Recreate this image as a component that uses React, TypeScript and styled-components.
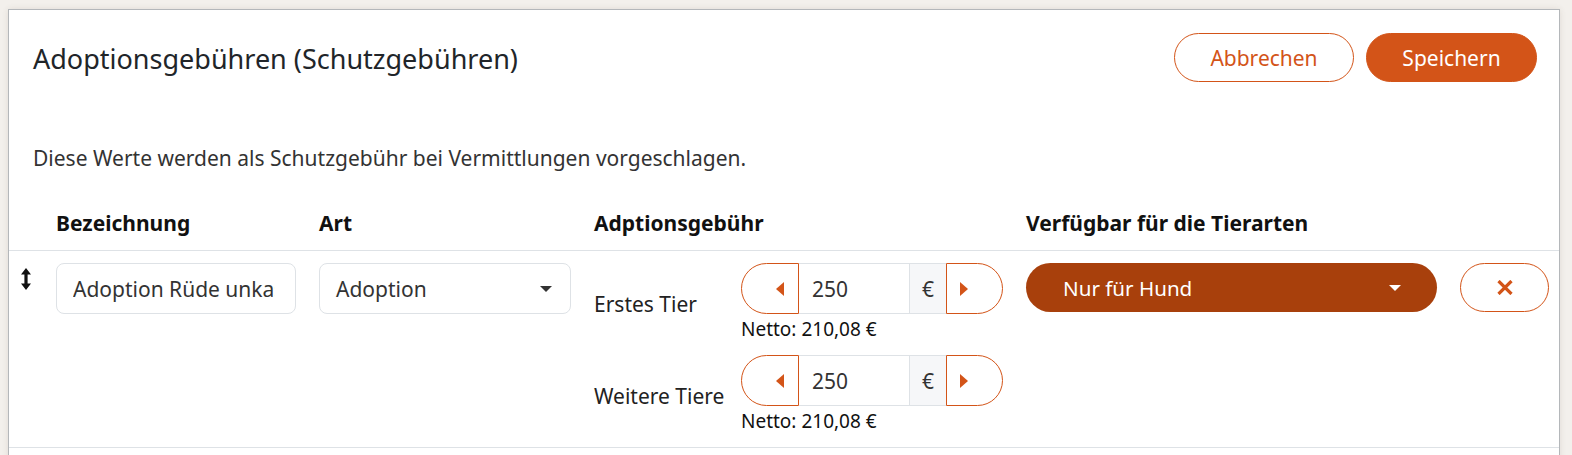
import React from "react";
import styled, { createGlobalStyle } from "styled-components";

const ORANGE = "#d35418";
const DARK_ORANGE = "#a8400c";
const LINE = "#dee2e6";
const COLS = "24px 240px 252px 409px 411px 89px";

const Global = createGlobalStyle`
  html, body { margin: 0; padding: 0; background: #f3f0ec; }
  body { font-family: "Noto Sans", "Open Sans", sans-serif; color: #212529; }
  * { box-sizing: border-box; }
`;

const Page = styled.div`
  padding: 9px 12px 0 8px;
  height: 455px;
  overflow: hidden;
`;

const Card = styled.section`
  background: #fff;
  border: 1px solid #b4b7ba;
  box-shadow: 0 0 6px rgba(90, 70, 50, 0.12);
  min-height: 600px;
`;

const CardHeader = styled.header`
  display: flex;
  align-items: flex-start;
  justify-content: space-between;
  padding: 23px 22px 0 24px;
`;

const Title = styled.h1`
  margin: 1px 0 0;
  font-size: 27px;
  line-height: 49px;
  font-weight: 400;
  color: #212529;
`;

const Actions = styled.div`
  display: flex;
  gap: 12px;
`;

const PillButton = styled.button<{ $primary?: boolean; $w: number }>`
  width: ${(p) => p.$w}px;
  height: 49px;
  border-radius: 25px;
  border: 1px solid ${ORANGE};
  background: ${(p) => (p.$primary ? ORANGE : "#fff")};
  color: ${(p) => (p.$primary ? "#fff" : ORANGE)};
  font-family: inherit;
  font-size: 21px;
  padding: 0;
  cursor: pointer;
`;

const Description = styled.p`
  margin: 60px 24px 0;
  font-size: 21px;
  line-height: 30px;
  color: #333;
`;

const HeadRow = styled.div`
  display: grid;
  grid-template-columns: ${COLS};
  column-gap: 23px;
  padding: 35px 0 12px;
  border-bottom: 1px solid ${LINE};
`;

const HeadCell = styled.div`
  font-size: 21px;
  line-height: 30px;
  font-weight: 700;
  color: #111;
`;

const BodyRow = styled.div`
  display: grid;
  grid-template-columns: ${COLS};
  column-gap: 23px;
  align-items: start;
  padding: 12px 0 13px;
  border-bottom: 1px solid ${LINE};
`;

const DragHandle = styled.div`
  padding: 5px 0 0 12px;
  line-height: 0;
`;

const TextInput = styled.input`
  width: 100%;
  height: 51px;
  border: 1px solid ${LINE};
  border-radius: 8px;
  padding: 0 20px 0 16px;
  font-family: inherit;
  font-size: 21px;
  color: #333;
  background: #fff;
  outline: none;
`;

const SelectBox = styled.div`
  height: 51px;
  border: 1px solid ${LINE};
  border-radius: 8px;
  padding: 0 18px 0 16px;
  display: flex;
  align-items: center;
  justify-content: space-between;
  font-size: 21px;
  color: #333;
`;

const FeeStack = styled.div`
  display: flex;
  flex-direction: column;
  gap: 13px;
`;

const FeeLine = styled.div`
  display: grid;
  grid-template-columns: 147px 262px;
  align-items: center;
`;

const FeeLabel = styled.div`
  font-size: 21px;
  line-height: 30px;
  color: #222;
  padding-top: 3px;
`;

const FeeControl = styled.div`
  display: flex;
  flex-direction: column;
`;

const Group = styled.div`
  display: flex;
  height: 51px;
`;

const StepButton = styled.button<{ $side: "left" | "right" }>`
  width: 58px;
  height: 100%;
  border: 1px solid ${ORANGE};
  background: #fff;
  display: flex;
  align-items: center;
  padding: 0;
  justify-content: ${(p) => (p.$side === "left" ? "flex-end" : "flex-start")};
  ${(p) =>
    p.$side === "left"
      ? "border-radius: 26px 0 0 26px; padding-right: 14px;"
      : "border-radius: 0 26px 26px 0; padding-left: 13px; width: 57px;"}
  cursor: pointer;
`;

const NumberField = styled.div`
  width: 110px;
  border-top: 1px solid ${LINE};
  border-bottom: 1px solid ${LINE};
  display: flex;
  align-items: center;
  padding-left: 13px;
  font-size: 21px;
  color: #333;
`;

const Addon = styled.div`
  width: 37px;
  border: 1px solid ${LINE};
  border-right: none;
  background: #f6f7f9;
  display: flex;
  align-items: center;
  justify-content: center;
  font-size: 21px;
  color: #333;
`;

const Netto = styled.div`
  margin-top: 2px;
  font-size: 19px;
  line-height: 26px;
  color: #111;
`;

const SpeciesSelect = styled.div`
  height: 49px;
  border-radius: 25px;
  background: ${DARK_ORANGE};
  color: #fff;
  display: flex;
  align-items: center;
  justify-content: space-between;
  padding: 0 36px 0 37px;
  font-size: 20.6px;
`;

const RemoveButton = styled.button`
  width: 89px;
  height: 49px;
  border-radius: 25px;
  border: 1px solid ${ORANGE};
  background: #fff;
  display: flex;
  align-items: center;
  justify-content: center;
  padding: 0;
  cursor: pointer;
`;

const Caret = ({ color }: { color: string }) => (
  <svg width="12" height="6" viewBox="0 0 12 6">
    <path d="M0 0 L12 0 L6 6 Z" fill={color} />
  </svg>
);

const Tri = ({ dir }: { dir: "left" | "right" }) => (
  <svg width="8" height="14" viewBox="0 0 8 14">
    <path d={dir === "left" ? "M8 0 L0 7 L8 14 Z" : "M0 0 L8 7 L0 14 Z"} fill={ORANGE} />
  </svg>
);

const DragIcon = () => (
  <svg width="10" height="22" viewBox="0 0 10 22">
    <path d="M5 0 L10 6.5 L6.6 6.5 L6.6 15.5 L10 15.5 L5 22 L0 15.5 L3.4 15.5 L3.4 6.5 L0 6.5 Z" fill="#111" />
  </svg>
);

const CloseIcon = () => (
  <svg width="16" height="15" viewBox="0 0 16 15">
    <path d="M1.5 1 L14.5 14 M14.5 1 L1.5 14" stroke={ORANGE} strokeWidth="3.2" />
  </svg>
);

const fees = [
  { label: "Erstes Tier", value: "250", netto: "Netto: 210,08 €" },
  { label: "Weitere Tiere", value: "250", netto: "Netto: 210,08 €" },
];

export default function App() {
  return (
    <>
      <Global />
      <Page>
        <Card>
          <CardHeader>
            <Title>Adoptionsgebühren (Schutzgebühren)</Title>
            <Actions>
              <PillButton $w={180}>Abbrechen</PillButton>
              <PillButton $primary $w={171}>Speichern</PillButton>
            </Actions>
          </CardHeader>
          <Description>Diese Werte werden als Schutzgebühr bei Vermittlungen vorgeschlagen.</Description>
          <HeadRow>
            <HeadCell />
            <HeadCell>Bezeichnung</HeadCell>
            <HeadCell>Art</HeadCell>
            <HeadCell>Adptionsgebühr</HeadCell>
            <HeadCell>Verfügbar für die Tierarten</HeadCell>
            <HeadCell />
          </HeadRow>
          <BodyRow>
            <DragHandle>
              <DragIcon />
            </DragHandle>
            <TextInput defaultValue="Adoption Rüde unkastriert" />
            <SelectBox>
              <span>Adoption</span>
              <Caret color="#333" />
            </SelectBox>
            <FeeStack>
              {fees.map((f) => (
                <FeeLine key={f.label}>
                  <FeeLabel>{f.label}</FeeLabel>
                  <FeeControl>
                    <Group>
                      <StepButton $side="left">
                        <Tri dir="left" />
                      </StepButton>
                      <NumberField>{f.value}</NumberField>
                      <Addon>€</Addon>
                      <StepButton $side="right">
                        <Tri dir="right" />
                      </StepButton>
                    </Group>
                    <Netto>{f.netto}</Netto>
                  </FeeControl>
                </FeeLine>
              ))}
            </FeeStack>
            <SpeciesSelect>
              <span>Nur für Hund</span>
              <Caret color="#fff" />
            </SpeciesSelect>
            <RemoveButton>
              <CloseIcon />
            </RemoveButton>
          </BodyRow>
        </Card>
      </Page>
    </>
  );
}
